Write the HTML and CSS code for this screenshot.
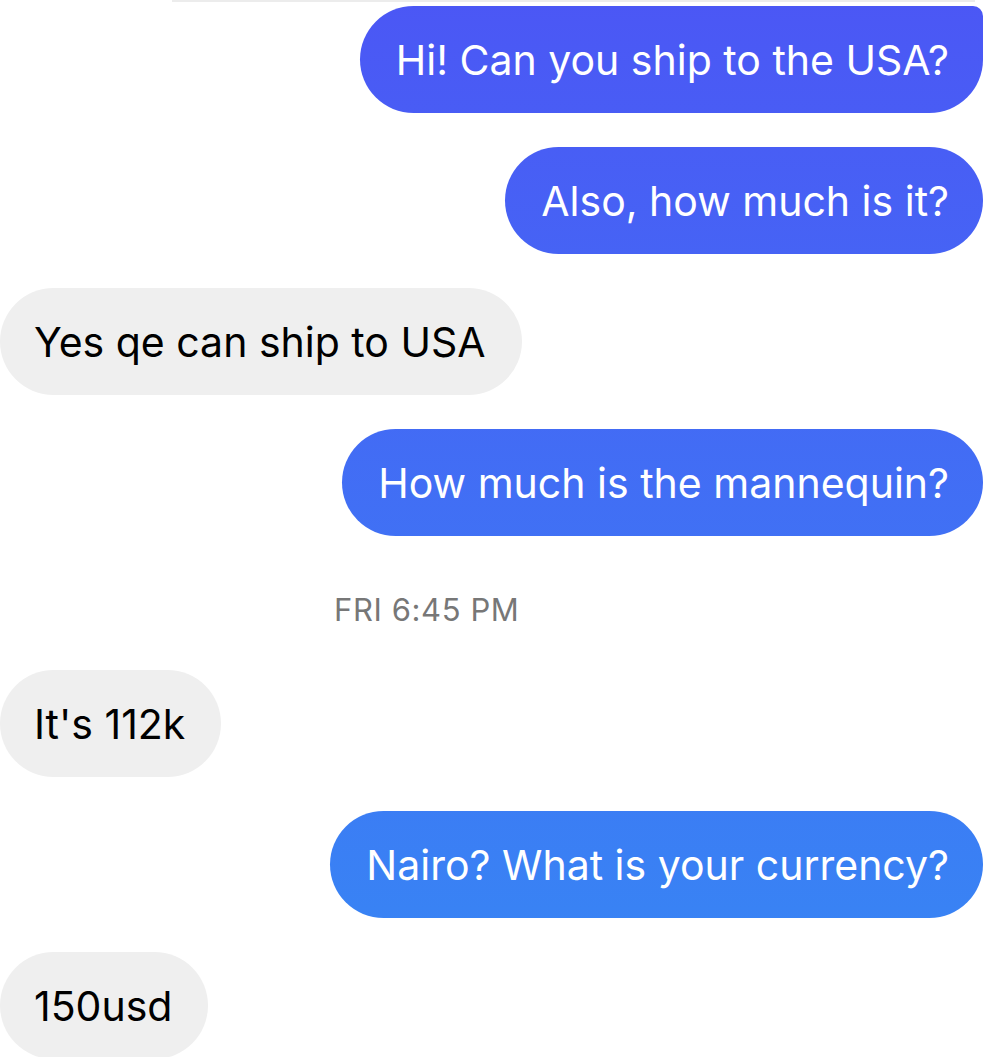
FILE: index.html
```html
<!DOCTYPE html>
<html>
<head>
<meta charset="utf-8">
<link rel="stylesheet" href="styles.css">
</head>
<body>
<div class="thread">
  <div class="topline"></div>
  <div class="row out first"><div class="bubble sent top">Hi! Can you ship to the USA?</div></div>
  <div class="row out"><div class="bubble sent">Also, how much is it?</div></div>
  <div class="row in"><div class="bubble recv">Yes qe can ship to USA</div></div>
  <div class="row out"><div class="bubble sent">How much is the mannequin?</div></div>
  <div class="stamp">FRI 6:45 PM</div>
  <div class="row in"><div class="bubble recv">It's 112k</div></div>
  <div class="row out"><div class="bubble sent">Nairo? What is your currency?</div></div>
  <div class="row in"><div class="bubble recv">150usd</div></div>
</div>
</body>
</html>
```
FILE: styles.css
```css
html, body {
  margin: 0;
  padding: 0;
  background: #ffffff;
}
body {
  font-family: "Inter", "Roboto", "Liberation Sans", sans-serif;
  overflow: hidden;
  height: 1057px;
}
.thread {
  display: flex;
  flex-direction: column;
  gap: 34px;
}
.topline {
  height: 2px;
  margin-left: 172px;
  width: 803px;
  background: #ececec;
  margin-bottom: -30px;
}
.row {
  display: flex;
}
.row.out {
  justify-content: flex-end;
  padding-right: 2px;
}
.row.in {
  justify-content: flex-start;
}
.bubble {
  height: 107px;
  box-sizing: border-box;
  display: flex;
  align-items: center;
  padding: 0 34px;
  border-radius: 54px;
  font-size: 41px;
  letter-spacing: 0;
  white-space: nowrap;
}
.row.out .bubble {
  padding-left: 36px;
}
.recv {
  color: #000000;
  background: #efefef;
  padding-right: 36px;
}
.sent {
  color: #ffffff;
  background: linear-gradient(to bottom, #4b57f5 0px, #3689f4 1057px);
  background-attachment: fixed;
}
.sent.top {
  border-top-right-radius: 10px;
}
.stamp {
  align-self: flex-start;
  margin-left: 334px;
  font-size: 31px;
  letter-spacing: 0.6px;
  color: #777777;
  margin-top: 23px;
  margin-bottom: 9px;
  line-height: 34px;
}
```
